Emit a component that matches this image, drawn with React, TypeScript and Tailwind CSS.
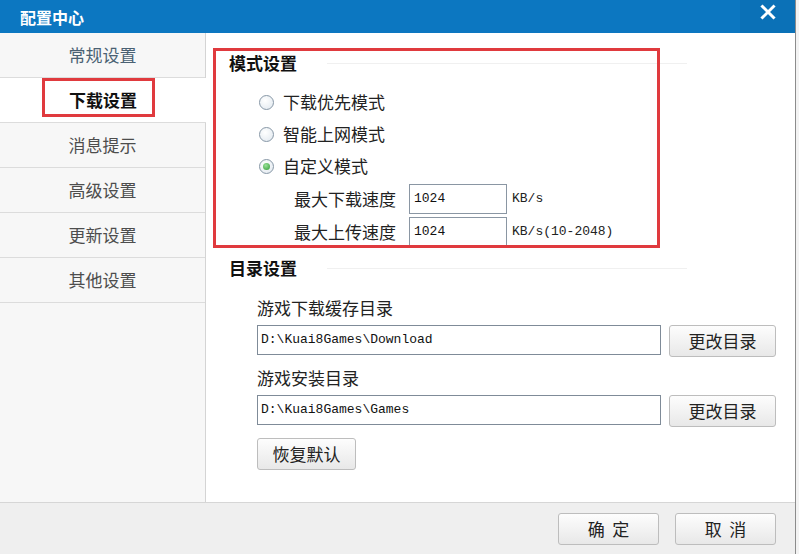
import React from "react";

const cjk = { fontFamily: '"Noto Sans CJK SC", "Noto Sans", sans-serif' };

function Radio({ checked, label }: { checked?: boolean; label: string }) {
  return (
    <div className="flex h-[32px] items-center pl-[30px]">
      <span className="flex h-[15px] w-[15px] items-center justify-center rounded-full border border-[#8797a6] bg-[radial-gradient(circle_at_40%_35%,#ffffff,#dfe7ee)]">
        {checked && (
          <span className="h-[7px] w-[7px] rounded-full bg-[radial-gradient(circle_at_40%_35%,#9be29b,#2f9a34)]" />
        )}
      </span>
      <span className="ml-[9px] text-[17px] leading-[24px] text-[#222]">{label}</span>
    </div>
  );
}

function Btn({ children, w }: { children: React.ReactNode; w: string }) {
  return (
    <button
      className={`${w} h-[32px] rounded-[3px] border border-[#bdbdbd] bg-gradient-to-b from-[#fdfdfd] to-[#e8e8e8] text-[17px] leading-[24px] text-[#222]`}
    >
      {children}
    </button>
  );
}

function SpeedRow({ label, unit }: { label: string; unit: string }) {
  return (
    <div className="flex h-[33px] items-center pl-[65px]">
      <span className="w-[115px] text-[17px] leading-[24px] text-[#222]">{label}</span>
      <div className="flex h-[30px] w-[98px] items-center border border-[#8a96a3] bg-white pl-[4px] font-['Liberation_Mono'] text-[13px] text-[#111]">
        1024
      </div>
      <span className="ml-[5px] font-['Liberation_Mono'] text-[13px] text-[#222]">{unit}</span>
    </div>
  );
}

function PathRow({ value }: { value: string }) {
  return (
    <div className="mt-[5px] flex items-start pl-[28px]">
      <div className="flex h-[30px] w-[404px] items-center border border-[#7f8b98] bg-white pl-[3px] font-['Liberation_Mono'] text-[13px] text-[#111]">
        {value}
      </div>
      <div className="ml-[8px]">
        <Btn w="w-[107px]">更改目录</Btn>
      </div>
    </div>
  );
}

function Heading({ text }: { text: string }) {
  return (
    <div className="flex h-[24px] items-center">
      <span className="text-[17px] font-bold leading-[24px] text-[#111]">{text}</span>
      <span className="ml-[30px] h-px w-[360px] bg-[#f0f0f0]" />
    </div>
  );
}

const menu = ["常规设置", "下载设置", "消息提示", "高级设置", "更新设置", "其他设置"];

export default function App() {
  return (
    <div className="flex h-[554px] w-[799px] overflow-hidden bg-[#f3f3f3]" style={cjk}>
      <div className="flex h-full w-[796px] flex-col border-r border-[#8c8c8c]">
        {/* title bar */}
        <div className="flex h-[33px] items-stretch bg-[#0c77c1]">
          <div className="flex flex-1 items-center pl-[20px] text-[16px] font-bold text-white">配置中心</div>
          <div className="flex w-[55px] items-start justify-center bg-[#0b71b7] pt-[4px]">
            <svg width="16" height="16" viewBox="0 0 16 16">
              <path d="M2.5 2.5 L13.5 13.5 M13.5 2.5 L2.5 13.5" stroke="#fff" strokeWidth="3" strokeLinecap="square" />
            </svg>
          </div>
        </div>

        {/* body */}
        <div className="flex h-[469px]">
          <div className="relative z-10 flex w-[206px] flex-col border-r border-[#d4d4d4] bg-[#f7f7f7]">
            {menu.map((m, i) => (
              <div
                key={m}
                className={
                  i === 1
                    ? "relative -mr-px flex h-[45px] items-center justify-center border-b border-[#dcdcdc] bg-white text-[17px] font-bold text-[#111]"
                    : `flex h-[45px] items-center justify-center border-b border-[#dcdcdc] text-[17px] ${
                        i === 0 ? "text-[#4a6173]" : "text-[#4d4d4d]"
                      }`
                }
              >
                {m}
                {i === 1 && (
                  <span className="absolute left-[42px] top-0 h-[39px] w-[113px] border-[3px] border-[#e03a3e]" />
                )}
              </div>
            ))}
          </div>

          <div className="relative flex flex-1 flex-col bg-white pl-[23px]">
            <span className="absolute left-[7px] top-[15px] h-[200px] w-[447px] border-[3px] border-[#e03a3e]" />
            <div className="mt-[18px]">
              <Heading text="模式设置" />
            </div>
            <div className="mt-[11px]">
              <Radio label="下载优先模式" />
              <Radio label="智能上网模式" />
              <Radio label="自定义模式" checked />
            </div>
            <SpeedRow label="最大下载速度" unit="KB/s" />
            <SpeedRow label="最大上传速度" unit="KB/s(10-2048)" />
            <div className="mt-[8px]">
              <Heading text="目录设置" />
            </div>
            <div className="mt-[16px] h-[24px] pl-[28px] text-[17px] leading-[24px] text-[#222]">游戏下载缓存目录</div>
            <PathRow value="D:\Kuai8Games\Download" />
            <div className="mt-[9px] h-[24px] pl-[28px] text-[17px] leading-[24px] text-[#222]">游戏安装目录</div>
            <PathRow value="D:\Kuai8Games\Games" />
            <div className="mt-[11px] pl-[28px]">
              <Btn w="w-[99px]">恢复默认</Btn>
            </div>
          </div>
        </div>

        {/* footer */}
        <div className="flex flex-1 items-start justify-end gap-[16px] border-t border-[#d6d6d6] bg-[#efefef] pr-[19px] pt-[10px]">
          <Btn w="w-[101px]">确&nbsp;&nbsp;定</Btn>
          <Btn w="w-[101px]">取&nbsp;&nbsp;消</Btn>
        </div>
      </div>
    </div>
  );
}
